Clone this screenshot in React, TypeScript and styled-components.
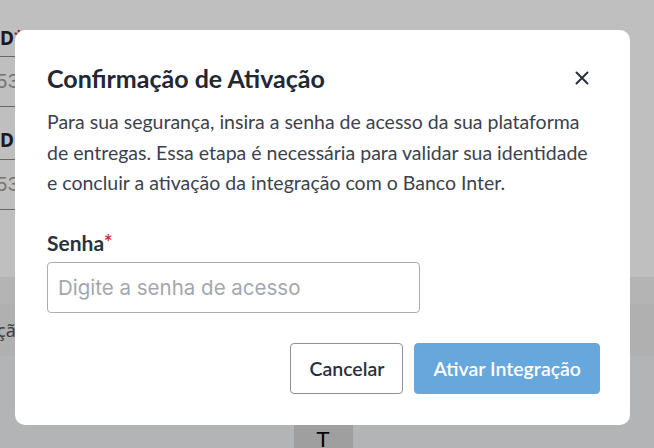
import React, { useState } from 'react';
import styled, { createGlobalStyle } from 'styled-components';

const GlobalStyle = createGlobalStyle`
  html, body {
    margin: 0;
    padding: 0;
    width: 654px;
    height: 448px;
    overflow: hidden;
    font-family: 'Lato', 'Noto Sans', sans-serif;
  }
  * {
    box-sizing: border-box;
  }
`;

const App: React.FC = () => {
  const [senha, setSenha] = useState('');

  return (
    <>
      <GlobalStyle />
      <Page>
        <FormArea>
          <FieldBlock>
            <FieldLabel>
              D<Required>*</Required>
            </FieldLabel>
            <FieldValue>53</FieldValue>
          </FieldBlock>
          <FieldBlock>
            <FieldLabel>D</FieldLabel>
            <FieldValue>53</FieldValue>
          </FieldBlock>
        </FormArea>
        <Footer>
          <FooterStrip />
          <FooterTab>çã</FooterTab>
          <FooterBar>
            <FooterButton>T</FooterButton>
          </FooterBar>
        </Footer>
      </Page>

      <Overlay>
        <Modal role="dialog" aria-labelledby="modal-title">
          <Header>
            <Title id="modal-title">Confirmação de Ativação</Title>
            <CloseButton aria-label="Fechar">
              <svg width="14" height="14" viewBox="0 0 14 14" fill="none">
                <path d="M1.5 1.5L12.5 12.5M12.5 1.5L1.5 12.5" stroke="#2a313c" strokeWidth="2" strokeLinecap="round" />
              </svg>
            </CloseButton>
          </Header>

          <Description>
            Para sua segurança, insira a senha de acesso da sua plataforma de entregas. Essa etapa é
            necessária para validar sua identidade e concluir a ativação da integração com o Banco Inter.
          </Description>

          <Field>
            <Label htmlFor="senha">
              Senha<Required>*</Required>
            </Label>
            <PasswordInput
              id="senha"
              type="password"
              placeholder="Digite a senha de acesso"
              value={senha}
              onChange={(e) => setSenha(e.target.value)}
            />
          </Field>

          <Actions>
            <Button variant="outline">Cancelar</Button>
            <Button variant="primary" disabled={!senha}>
              Ativar Integração
            </Button>
          </Actions>
        </Modal>
      </Overlay>
    </>
  );
};

export default App;

/* página atrás do modal */

const Page = styled.div`
  width: 654px;
  height: 448px;
  background: #ffffff;
  display: flex;
  flex-direction: column;
`;

const FormArea = styled.div`
  height: 277px;
  display: flex;
  flex-direction: column;
  padding-top: 4px;
`;

const FieldBlock = styled.div`
  display: flex;
  flex-direction: column;
  width: 40px;
  margin-left: -8px;
`;

const FieldLabel = styled.div`
  height: 53px;
  padding: 22px 0 0 8px;
  font-family: 'Noto Sans', sans-serif;
  font-weight: 700;
  font-size: 19px;
  line-height: 22px;
  color: #1e2530;
  border-bottom: 1px solid #8b8b8b;
`;

const FieldValue = styled.div`
  height: 50px;
  font-family: 'Inter', sans-serif;
  font-size: 19px;
  line-height: 49px;
  color: #9a9a9a;
  padding-left: 4px;
  border-bottom: 1px solid #8b8b8b;
`;

const Footer = styled.div`
  flex: 1;
  background: #eef0f3;
  display: flex;
  flex-direction: column;
`;

const FooterStrip = styled.div`
  height: 27px;
  background: #f0f0f0;
`;

const FooterTab = styled.div`
  height: 52px;
  background: #ebebeb;
  font-family: 'Noto Sans', sans-serif;
  font-size: 18px;
  line-height: 52px;
  color: #555;
  margin-left: -3px;
`;

const FooterBar = styled.div`
  flex: 1;
  display: flex;
  justify-content: center;
  align-items: flex-end;
`;

const FooterButton = styled.div`
  width: 59px;
  height: 23px;
  margin-left: -8px;
  background: #d4d4d4;
  font-family: 'Liberation Sans', sans-serif;
  font-size: 22px;
  line-height: 30px;
  text-align: center;
  color: #000;
  overflow: hidden;
`;

/* modal */

const Overlay = styled.div`
  position: fixed;
  inset: 0;
  background: rgba(0, 0, 0, 0.25);
  display: flex;
  align-items: flex-start;
  padding: 30px 24px 0 15px;
  z-index: 1000;
`;

const Modal = styled.div`
  width: 615px;
  height: 395px;
  background: #ffffff;
  border-radius: 10px;
  padding: 33px 30px 31px 32px;
  display: flex;
  flex-direction: column;
`;

const Header = styled.div`
  display: flex;
  align-items: center;
  justify-content: space-between;
  height: 30px;
`;

const Title = styled.h2`
  margin: 0;
  font-size: 25px;
  line-height: 30px;
  font-weight: 700;
  color: #212833;
`;

const CloseButton = styled.button`
  width: 24px;
  height: 24px;
  margin-right: 6px;
  padding: 0;
  border: none;
  background: none;
  display: flex;
  align-items: center;
  justify-content: center;
  cursor: pointer;
`;

const Description = styled.p`
  margin: 14px 0 0;
  font-size: 19.5px;
  line-height: 30.7px;
  color: #3b424d;
`;

const Field = styled.div`
  display: flex;
  flex-direction: column;
  gap: 7px;
  margin-top: 31px;
`;

const Label = styled.label`
  font-size: 21px;
  line-height: 24px;
  font-weight: 700;
  color: #2a313c;
`;

const Required = styled.span`
  color: #b83a33;
  font-size: 0.95em;
  vertical-align: 1px;
`;

const PasswordInput = styled.input`
  width: 373px;
  height: 51px;
  padding: 0 10px;
  border: 1px solid #a9adb3;
  border-radius: 4px;
  font-family: 'Inter', sans-serif;
  font-size: 20.5px;
  color: #2a313c;
  outline: none;

  &::placeholder {
    color: #a3a7ad;
  }

  &:focus {
    border-color: #67a7db;
  }
`;

const Actions = styled.div`
  margin-top: auto;
  display: flex;
  justify-content: flex-end;
  gap: 11px;
`;

const Button = styled.button<{ variant: 'outline' | 'primary' }>`
  height: 51px;
  padding: 0 18px;
  border-radius: 4px;
  font-family: 'Lato', 'Noto Sans', sans-serif;
  font-size: 19.5px;
  font-weight: 600;
  cursor: pointer;
  border: 1px solid ${({ variant }) => (variant === 'outline' ? '#8d9199' : '#67a7db')};
  background: ${({ variant }) => (variant === 'outline' ? '#ffffff' : '#67a7db')};
  color: ${({ variant }) => (variant === 'outline' ? '#2a313c' : '#ffffff')};

  &:disabled {
    cursor: not-allowed;
  }
`;
